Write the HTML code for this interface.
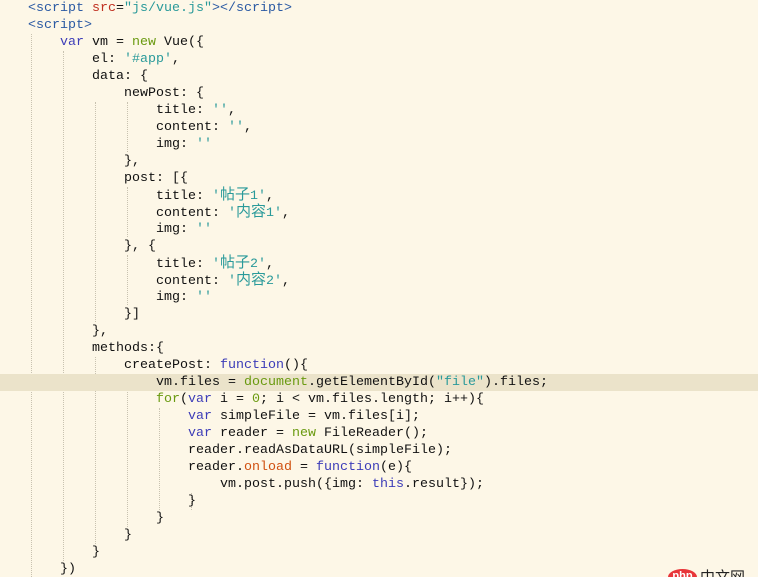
<!DOCTYPE html>
<html><head><meta charset="utf-8"><style>
html,body{margin:0;height:577px;overflow:hidden}
body{background:#fdf7e7;width:758px;position:relative;font-family:"Liberation Mono","Noto Sans CJK SC",monospace;font-size:13.33px;color:#111}
.l{position:absolute;left:0;width:758px;height:17px;line-height:17px;white-space:pre}
.t{position:absolute}
.hl{background:#ebe3ca}
.g{position:absolute;width:0;border-left:1px dotted #c8c2b0}
.tag{color:#2b5aa3}.at{color:#c03020}.s{color:#2a9a9a}.k{color:#3c3cb8}.n{color:#6a9a10}.o{color:#d05010}
.c{font-size:15px}
</style></head><body>
<div class="g" style="left:31px;top:34px;height:543px"></div>
<div class="g" style="left:63px;top:51px;height:510px"></div>
<div class="g" style="left:95px;top:102px;height:220px"></div>
<div class="g" style="left:127px;top:102px;height:50px"></div>
<div class="g" style="left:127px;top:187px;height:50px"></div>
<div class="g" style="left:127px;top:255px;height:50px"></div>
<div class="g" style="left:95px;top:357px;height:187px"></div>
<div class="g" style="left:127px;top:374px;height:153px"></div>
<div class="g" style="left:159px;top:408px;height:102px"></div>
<div class="g" style="left:191px;top:493px;height:17px"></div>
<div class="l" style="top:0"><span class="t" style="left:28px"><span class="tag">&lt;script</span> <span class="at">src</span>=<span class="s">"js/vue.js"</span><span class="tag">&gt;&lt;/script&gt;</span></span></div>
<div class="l" style="top:17px"><span class="t tag" style="left:28px">&lt;script&gt;</span></div>
<div class="l" style="top:34px"><span class="t" style="left:60px"><span class="k">var</span> vm = <span class="n">new</span> Vue({</span></div>
<div class="l" style="top:51px"><span class="t" style="left:92px">el: <span class="s">'#app'</span>,</span></div>
<div class="l" style="top:68px"><span class="t" style="left:92px">data: {</span></div>
<div class="l" style="top:85px"><span class="t" style="left:124px">newPost: {</span></div>
<div class="l" style="top:102px"><span class="t" style="left:156px">title: <span class="s">''</span>,</span></div>
<div class="l" style="top:119px"><span class="t" style="left:156px">content: <span class="s">''</span>,</span></div>
<div class="l" style="top:136px"><span class="t" style="left:156px">img: <span class="s">''</span></span></div>
<div class="l" style="top:153px"><span class="t" style="left:124px">},</span></div>
<div class="l" style="top:170px"><span class="t" style="left:124px">post: [{</span></div>
<div class="l" style="top:187px"><span class="t" style="left:156px">title: <span class="s">'<span class="c">帖子</span>1'</span>,</span></div>
<div class="l" style="top:204px"><span class="t" style="left:156px">content: <span class="s">'<span class="c">内容</span>1'</span>,</span></div>
<div class="l" style="top:221px"><span class="t" style="left:156px">img: <span class="s">''</span></span></div>
<div class="l" style="top:238px"><span class="t" style="left:124px">}, {</span></div>
<div class="l" style="top:255px"><span class="t" style="left:156px">title: <span class="s">'<span class="c">帖子</span>2'</span>,</span></div>
<div class="l" style="top:272px"><span class="t" style="left:156px">content: <span class="s">'<span class="c">内容</span>2'</span>,</span></div>
<div class="l" style="top:289px"><span class="t" style="left:156px">img: <span class="s">''</span></span></div>
<div class="l" style="top:306px"><span class="t" style="left:124px">}]</span></div>
<div class="l" style="top:323px"><span class="t" style="left:92px">},</span></div>
<div class="l" style="top:340px"><span class="t" style="left:92px">methods:{</span></div>
<div class="l" style="top:357px"><span class="t" style="left:124px">createPost: <span class="k">function</span>(){</span></div>
<div class="l hl" style="top:374px"><span class="t" style="left:156px">vm.files = <span class="n">document</span>.getElementById(<span class="s">"file"</span>).files;</span></div>
<div class="l" style="top:391px"><span class="t" style="left:156px"><span class="n">for</span>(<span class="k">var</span> i = <span class="n">0</span>; i &lt; vm.files.length; i++){</span></div>
<div class="l" style="top:408px"><span class="t" style="left:188px"><span class="k">var</span> simpleFile = vm.files[i];</span></div>
<div class="l" style="top:425px"><span class="t" style="left:188px"><span class="k">var</span> reader = <span class="n">new</span> FileReader();</span></div>
<div class="l" style="top:442px"><span class="t" style="left:188px">reader.readAsDataURL(simpleFile);</span></div>
<div class="l" style="top:459px"><span class="t" style="left:188px">reader.<span class="o">onload</span> = <span class="k">function</span>(e){</span></div>
<div class="l" style="top:476px"><span class="t" style="left:220px">vm.post.push({img: <span class="k">this</span>.result});</span></div>
<div class="l" style="top:493px"><span class="t" style="left:188px">}</span></div>
<div class="l" style="top:510px"><span class="t" style="left:156px">}</span></div>
<div class="l" style="top:527px"><span class="t" style="left:124px">}</span></div>
<div class="l" style="top:544px"><span class="t" style="left:92px">}</span></div>
<div class="l" style="top:561px"><span class="t" style="left:60px">})</span></div>
<div style="position:absolute;left:668px;top:569px;width:29px;height:16px;border-radius:50%;background:#e8363a;color:#fff;font:bold 11px 'Liberation Sans',sans-serif;text-align:center;line-height:14px">php</div>
<div style="position:absolute;left:700px;top:566px;font:15px 'Noto Sans CJK SC',sans-serif;color:#222">中文网</div>
</body></html>
